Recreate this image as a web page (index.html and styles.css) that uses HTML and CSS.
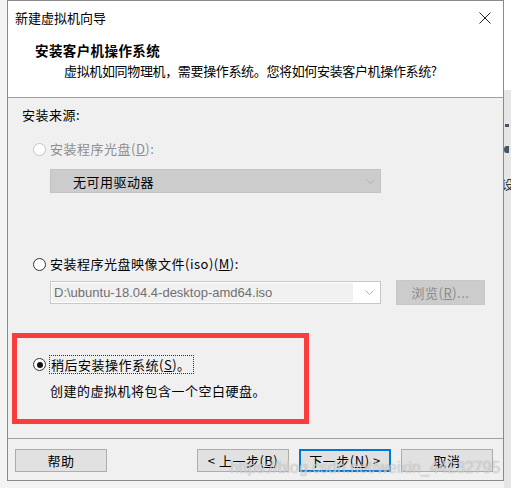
FILE: index.html
```html
<!DOCTYPE html>
<html lang="zh-CN">
<head>
<meta charset="utf-8">
<title>新建虚拟机向导</title>
<link rel="stylesheet" href="styles.css">
</head>
<body>
<div class="stage">
  <div class="window">
    <div class="header">
      <div class="titlebar">
        <span class="title">新建虚拟机向导</span>
        <svg class="close" width="12" height="12" viewBox="0 0 12 12"><path d="M0.5 0.5 L11.5 11.5 M11.5 0.5 L0.5 11.5" stroke="#222" stroke-width="1" fill="none"/></svg>
      </div>
      <div class="heading">安装客户机操作系统</div>
      <div class="subtitle">虚拟机如同物理机，需要操作系统。您将如何安装客户机操作系统?</div>
    </div>
    <div class="content">
      <div class="group-label">安装来源:</div>
      <div class="radio-row disabled r1">
        <span class="radio"></span>
        <span>安装程序光盘(<u>D</u>):</span>
      </div>
      <div class="combo combo-disabled">
        <span class="combo-text">无可用驱动器</span>
        <svg class="chev" width="9" height="5" viewBox="0 0 9 5"><path d="M0.5 0.5 L4.5 4.5 L8.5 0.5" stroke="#b0b0b0" fill="none"/></svg>
      </div>
      <div class="radio-row r2">
        <span class="radio"></span>
        <span>安装程序光盘映像文件(iso)(<u>M</u>):</span>
      </div>
      <div class="iso-row">
        <div class="combo combo-iso">
          <span class="iso-field">D:\ubuntu-18.04.4-desktop-amd64.iso</span>
          <svg class="chev" width="9" height="5" viewBox="0 0 9 5"><path d="M0.5 0.5 L4.5 4.5 L8.5 0.5" stroke="#b0b0b0" fill="none"/></svg>
        </div>
        <div class="btn btn-disabled">浏览(<u>R</u>)...</div>
      </div>
      <div class="radio-row r3">
        <span class="radio checked"></span>
        <span class="focus">稍后安装操作系统(<u>S</u>)。</span>
      </div>
      <div class="desc">创建的虚拟机将包含一个空白硬盘。</div>
    </div>
    <div class="footer">
      <div class="btn">帮助</div>
      <div class="spacer"></div>
      <div class="btn">&lt; 上一步(<u>B</u>)</div>
      <div class="btn btn-default">下一步(<u>N</u>) &gt;</div>
      <div class="btn">取消</div>
    </div>
  </div>
  <div class="side">
    <span class="side-dot d1"></span>
    <span class="side-dot d2"></span>
    <span class="side-char">设</span>
  </div>
  <div class="annotation"></div>
  <div class="watermark">https://blog.csdn.net/weixin_44232795</div>
</div>
</body>
</html>
```
FILE: styles.css
```css
html, body {
  margin: 0;
  padding: 0;
}
body {
  background: #f3f3f3;
  font-family: "Noto Sans CJK SC", "Microsoft YaHei", sans-serif;
  font-size: 13px;
  color: #000;
  width: 511px;
  height: 488px;
  overflow: hidden;
}
.stage {
  position: relative;
  display: flex;
  width: 511px;
  height: 488px;
}
.window {
  margin-left: 7px;
  width: 497px;
  height: 481px;
  box-sizing: border-box;
  border: 1px solid #8a8a8a;
  background: #f0f0f0;
  display: flex;
  flex-direction: column;
}
.header {
  background: #fff;
  height: 96px;
  border-bottom: 1px solid #a0a0a0;
  display: flex;
  flex-direction: column;
  flex: none;
}
.titlebar {
  height: 33px;
  display: flex;
  align-items: center;
  padding-left: 7px;
  padding-right: 12px;
}
.title {
  flex: 1;
  font-size: 13px;
  line-height: 20px;
  margin-top: 1px;
}
.heading {
  font-weight: bold;
  line-height: 20px;
  margin-top: 6px;
  padding-left: 27px;
  font-size: 13.5px;
  letter-spacing: 0.4px;
}
.subtitle {
  line-height: 20px;
  margin-top: 1px;
  padding-left: 56px;
  font-size: 13px;
  letter-spacing: -0.35px;
}
.content {
  flex: 1;
  display: flex;
  flex-direction: column;
  padding-left: 14px;
}
.group-label {
  line-height: 20px;
  margin-top: 7px;
  letter-spacing: 0.5px;
}
.radio-row {
  display: flex;
  align-items: center;
  line-height: 20px;
  padding-left: 11px;
  letter-spacing: 0.5px;
}
.radio-row.disabled {
  color: #8d8d8d;
}
.r1 { margin-top: 14px; }
.r2 { margin-top: 61px; }
.r3 { margin-top: 51px; }
.radio {
  width: 11px;
  height: 11px;
  border: 1px solid #333;
  border-radius: 50%;
  background: #fff;
  margin-right: 4px;
  position: relative;
  flex: none;
}
.disabled .radio {
  border-color: #c6c6c6;
}
.radio.checked::after {
  content: "";
  position: absolute;
  left: 2.5px;
  top: 2.5px;
  width: 6px;
  height: 6px;
  border-radius: 50%;
  background: #111;
}
.combo {
  height: 24px;
  width: 331px;
  box-sizing: border-box;
  display: flex;
  align-items: center;
  margin-left: 28px;
}
.combo-disabled {
  margin-top: 10px;
  background: #cccccc;
  border: 1px solid #c4c4c4;
  padding-left: 22px;
}
.combo-text {
  flex: 1;
  letter-spacing: 0.5px;
}
.chev {
  margin-right: 5px;
}
.iso-row {
  display: flex;
  align-items: center;
  margin-top: 6px;
  height: 25px;
}
.combo-iso {
  height: 23px;
  background: #fff;
  border: 1px solid #c8c8c8;
  padding: 1px;
}
.iso-field {
  flex: 1;
  align-self: stretch;
  background: #f1f1f1;
  color: #6f6f6f;
  font-family: "Liberation Sans", Arial, sans-serif;
  font-size: 13px;
  line-height: 19px;
  padding-left: 2px;
  margin-right: 12px;
}
.btn {
  width: 92px;
  height: 23px;
  box-sizing: border-box;
  background: #e1e1e1;
  border: 1px solid #adadad;
  display: flex;
  align-items: center;
  justify-content: center;
  line-height: 20px;
  letter-spacing: 0.5px;
  flex: none;
}
.btn-disabled {
  margin-left: 15px;
  width: 89px;
  height: 25px;
  background: #cccccc;
  border-color: #c8c8c8;
  color: #8a8a8a;
}
.btn-default {
  border: 2px solid #0078d7;
}
.desc {
  margin-top: 8px;
  line-height: 20px;
  padding-left: 28px;
  letter-spacing: 0.5px;
}
.focus {
  outline: 1px dotted #333;
  outline-offset: 0px;
  padding: 0 2px 0 1px;
  line-height: 17px;
}
.footer {
  flex: none;
  height: 42px;
  border-top: 1px solid #a0a0a0;
  display: flex;
  align-items: flex-start;
  padding: 10px 10px 0 7px;
  gap: 10px;
  box-sizing: border-box;
}
.footer .spacer {
  flex: 1;
}
.side {
  flex: 1;
  position: relative;
  overflow: hidden;
  background: linear-gradient(#ffffff 0, #ffffff 90px, #e6e6e6 90px);
}
.side-dot {
  position: absolute;
  background: #445566;
}
.d1 { left: 1px; top: 124px; width: 4px; height: 3px; }
.d2 { left: 0px; top: 146px; width: 5px; height: 7px; border-radius: 50% 0 0 50%; }
.side-char {
  position: absolute;
  left: -3px;
  top: 176px;
  font-size: 13px;
  line-height: 16px;
  color: #333;
}
.annotation {
  position: absolute;
  left: 12px;
  top: 333px;
  width: 297px;
  height: 91px;
  box-sizing: border-box;
  border: 5px solid #fa3c3c;
}
.watermark {
  position: absolute;
  left: 230px;
  top: 458px;
  font-family: "Liberation Sans", Arial, sans-serif;
  font-size: 15.9px;
  line-height: 20px;
  color: rgba(255, 255, 255, 0.55);
  text-shadow: 0 0 1px rgba(90, 90, 90, 0.55);
  white-space: nowrap;
}
```
